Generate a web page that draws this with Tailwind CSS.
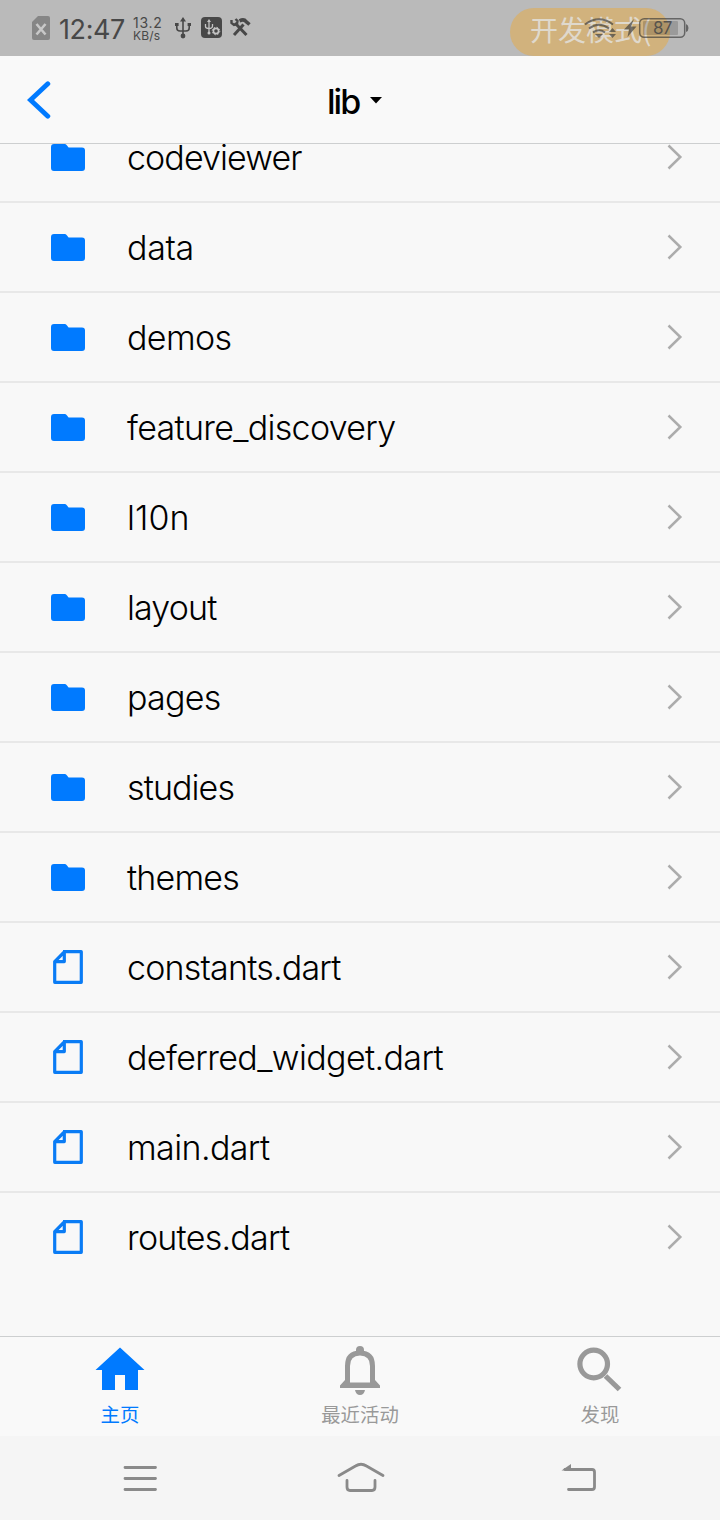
<!DOCTYPE html>
<html lang="zh-CN">
<head>
<meta charset="utf-8">
<title>lib</title>
<script src="https://cdn.jsdelivr.net/npm/@tailwindcss/browser@4"></script>
</head>
<body class="w-[720px] h-[1520px] overflow-hidden bg-[#f8f8f8] font-['Inter','Noto_Sans_CJK_SC',sans-serif] text-black">
<svg class="hidden">
  <symbol id="folder" viewBox="0 0 34 27"><path d="M3 0H13.5Q15 0 15.8 1.2L17.6 3.4H31Q34 3.4 34 6.4V24Q34 27 31 27H3Q0 27 0 24V3Q0 0 3 0Z" fill="#007aff"/></symbol>
  <symbol id="file" viewBox="0 0 30 34"><path d="M10 1.7H28.3V32.3H1.7V11.6L11.3 2V11.6H2" fill="none" stroke="#0a7cf5" stroke-width="3.2" stroke-linejoin="round"/></symbol>
  <symbol id="chev" viewBox="0 0 16 26"><path d="M1.500 1.500L13.300 13L1.500 24.500" fill="none" stroke="#acacac" stroke-width="2.500"/></symbol>
</svg>
<div class="flex h-full flex-col">
  <div class="relative flex h-14 shrink-0 items-center bg-[#bababa] pl-8 text-[#484848]">
    <svg class="h-6 w-[18px]" viewBox="0 0 18 24"><path d="M6 0H16Q18 0 18 2V22Q18 24 16 24H2Q0 24 0 22V6Z" fill="#868686"/><path d="M4.500 8l9 10.500M13.500 8l-9 10.500" stroke="#c8c8c8" stroke-width="2.6"/></svg>
    <span class="ml-[9px] mt-[3px] w-[66px] text-[27px] leading-none tracking-[-0.4px]">12:47</span>
    <div class="ml-[8px] mt-px w-[30px] whitespace-nowrap"><div class="text-[14px] leading-[13px] tracking-[0.7px]">13.2</div><div class="text-[12px] leading-[13px] tracking-[0.2px]">KB/s</div></div>
    <svg class="ml-[12px] h-[22px] w-4" viewBox="0 0 16 22" fill="none" stroke="#484848" stroke-width="1.6"><path d="M8 3V19M1.8 8V11Q1.8 14 5 14H11Q14.2 14 14.2 11V8"/><path d="M8 0L11 4.5H5Z" fill="#484848" stroke="none"/><circle cx="8" cy="19" r="2.4" fill="#484848" stroke="none"/><path d="M0 6h3.6v3H0zM12.6 6H16v3h-3.4z" fill="#484848" stroke="none"/></svg>
    <svg class="-mt-px ml-[10px] h-[21px] w-[21px]" viewBox="0 0 21 21" fill="none"><rect width="21" height="21" rx="4" fill="#484848"/><path d="M8 4V16M4.500 7V9.500Q4.500 11.500 8 11.500Q11.500 11.500 11.500 9V7" stroke="#c4c4c4" stroke-width="1.3"/><path d="M8 2L10 5H6Z" fill="#c4c4c4"/><circle cx="8" cy="16" r="1.5" fill="#c4c4c4"/><circle cx="15" cy="14" r="4.4" fill="#484848"/><circle cx="15" cy="14" r="2.600" stroke="#c4c4c4" stroke-width="1.600"/><circle cx="15" cy="14" r="3.800" stroke="#c4c4c4" stroke-width="1" stroke-dasharray="1.4 1.6"/></svg>
    <svg class="-mt-px ml-[8px] h-[19px] w-[21px]" viewBox="0 0 21 19" fill="none" stroke="#484848"><path d="M5 5L16.500 17" stroke-width="3"/><path d="M4 17L13.500 6.500" stroke-width="3"/><path d="M1.500 2V5L4 7L7 6L7.500 3L5.500 1" stroke-width="2.400"/><path d="M9.500 2.800Q14 .8 16 3.500L19.500 6.500" stroke-width="3.600"/></svg>
    <div class="absolute left-[510px] top-[8px] h-12 w-40 overflow-hidden whitespace-nowrap rounded-full bg-[#e8a93f]/50 pl-5 font-['Noto_Sans_CJK_SC',sans-serif] text-[28px] leading-[42px] text-[#e4e4e4]/80">开发模式(</div>
    <svg class="absolute left-[582px] top-[16px] h-[24px] w-[108px] opacity-65" viewBox="582 16 108 24" fill="none" stroke="#383838"><path d="M585 24.500Q599 14 613 24.500M589 28.500Q599 21 609 28.500M593 32.500Q599 28 605 32.500" stroke-width="2"/><path d="M595 34L599 38L603 34Z" fill="#383838" stroke="none"/><path d="M609 32L612.500 28L616 32ZM609 34L612.500 38L616 34Z" fill="#383838" stroke="none"/><path d="M634 19L624 29.500H629L627.500 37L636.500 26.500H631Z" fill="#383838" stroke="none"/><rect x="639.700" y="18.700" width="45" height="18.600" rx="4.500" stroke-width="1.500"/><rect x="643" y="21" width="35" height="14" rx="1" fill="#000" fill-opacity=".26" stroke="none"/><path d="M686 24Q688.500 25 688.500 28Q688.500 31 686 32Z" fill="#383838" stroke="none"/></svg>
    <span class="absolute left-[653px] top-[19px] text-[17px] leading-[18px] tracking-[-0.8px] text-[#484848]/85">87</span>
  </div>
  <header class="relative z-10 flex h-[88px] shrink-0 items-center border-b border-[#cdcfd0] bg-[#f9f9f9]">
    <svg class="ml-[27px] h-[38px] w-6" viewBox="0 0 24 38"><path d="M20.800 2.800L3.500 19L20.800 35.200" fill="none" stroke="#007aff" stroke-width="4.900" stroke-linecap="round"/></svg>
    <h1 class="ml-[276px] mt-[4px] w-[35px] text-[34px] font-medium leading-none tracking-[-2px]">lib</h1>
    <svg class="ml-[8px] mt-[2px] h-[7px] w-3" viewBox="0 0 12 7"><path d="M0 0H12L6 6.500Z"/></svg>
  </header>
  <main class="h-[1192px] shrink-0 overflow-hidden"><div id="rows" class="-mt-[31px]"></div></main>
  <nav class="grid h-[100px] shrink-0 grid-cols-3 border-t border-[#cdcfd0] bg-[#f9f9f9] text-center font-['Noto_Sans_CJK_SC',sans-serif] text-[19.4px] leading-7 text-[#999]">
    <div class="text-[#007aff]"><svg class="mx-auto mt-[8px] h-[50px] w-[50px]" viewBox="0 0 50 50"><path d="M25 2.500L49.500 25H43V45H30V30H20V45H7V25H.500Z" fill="#007aff"/></svg><div class="mt-[5px]">主页</div></div>
    <div><svg class="mx-auto mt-[8px] h-[50px] w-[50px]" viewBox="0 0 50 50"><path d="M12.500 38V21Q12.500 8 25 8Q37.500 8 37.500 21V38" fill="none" stroke="#999" stroke-width="5"/><path d="M21 8V5Q21 1 25 1Q29 1 29 5V8ZM10 35L5 40.500V43H45V40.500L40 35L38 37.500H12ZM20 45H30Q29 50 25 50Q21 50 20 45Z" fill="#999"/></svg><div class="mt-[5px]">最近活动</div></div>
    <div><svg class="mx-auto mt-[8px] h-[50px] w-[50px]" viewBox="0 0 50 50" fill="none" stroke="#999"><circle cx="18.700" cy="19" r="13.800" stroke-width="5.200"/><path d="M30.500 31L44.500 44.500" stroke-width="5.200"/></svg><div class="mt-[5px]">发现</div></div>
  </nav>
  <div class="grid grow grid-cols-3 items-center justify-items-center bg-[#f5f5f5] px-[14px]">
    <svg class="ml-[22px] h-[28px] w-[36px]" viewBox="0 0 36 28"><path d="M3 3.500H33.500M3 14.500H33.500M3 25.500H33.500" stroke="#8a8a8a" stroke-width="2.800" stroke-linecap="round"/></svg>
    <svg class="-mt-[4px] ml-[2px] h-[32px] w-[50px]" viewBox="0 0 50 32" fill="none" stroke="#8a8a8a" stroke-width="2.800" stroke-linecap="round"><path d="M3 15.500L19.500 6Q25 2.500 30.500 6L47 15.500M11 20.500V27Q11 30.500 14 30.500H36Q39 30.500 39 27V20.500"/></svg>
    <svg class="mr-[24px] h-[30px] w-[38px]" viewBox="0 0 38 30" fill="none" stroke="#8a8a8a" stroke-width="2.800" stroke-linecap="round"><path d="M5 6.500H32Q34.500 6.500 34.500 9V24Q34.500 26.500 32 26.500H8.500"/><path d="M1.500 7.500L11 1V7.500Z" fill="#8a8a8a" stroke="none"/></svg>
  </div>
</div>
<script>
// name, letter spacing in px
const entries = [['codeviewer',-0.9],['data',-0.3],['demos',-0.65],['feature_discovery',-0.7],['l10n',0.1],['layout',-0.85],['pages',-0.7],['studies',-0.9],['themes',-0.8],['constants.dart',-0.8],['deferred_widget.dart',-0.62],['main.dart',-0.6],['routes.dart',-0.75]];
document.getElementById('rows').innerHTML = entries.map(([n, ls], i) => {
  const icon = n.includes('.')
    ? '<svg class="ml-[53px] mr-[44px] h-[34px] w-[30px]"><use href="#file"/></svg>'
    : '<svg class="ml-[51px] mr-[42px] h-[27px] w-[34px]"><use href="#folder"/></svg>';
  return `<div class="flex h-[90px] items-center ${i < entries.length - 1 ? 'border-b-2 border-[#e8e8e8]' : 'pb-[2px]'}">${icon}<span class="mt-[2px] grow text-[34px] font-light leading-none" style="letter-spacing:${ls}px">${n}</span><svg class="mr-[37px] h-[26px] w-[16px]"><use href="#chev"/></svg></div>`;
}).join('');
</script>
</body>
</html>
